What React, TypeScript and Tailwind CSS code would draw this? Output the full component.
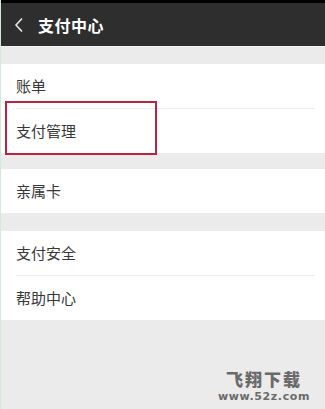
import React from 'react';

const font = { fontFamily: '"Noto Sans CJK SC", "Noto Sans", sans-serif' };

function Row({ label, divider }: { label: string; divider?: boolean }) {
  return (
    <div className="bg-white">
      <div className="h-[44px] flex items-center pl-[15px] text-[15px] text-[#383838]">{label}</div>
      {divider && <div className="ml-[15px] mr-[10px] h-px bg-[#ececec]" />}
    </div>
  );
}

export default function App() {
  return (
    <div className="relative w-[325px] h-[409px] bg-[#ebebeb] overflow-hidden border-l border-[#d4ead6]" style={font}>
      <div className="h-[3px] bg-black" />
      <div className="h-[43px] bg-[#2e2e2e] flex items-center">
        <svg width="10" height="16" viewBox="0 0 10 16" className="ml-[13px]">
          <path d="M8 1.5 L2 8 L8 14.5" fill="none" stroke="#e8e8e8" strokeWidth="1.6" />
        </svg>
        <span className="ml-[14px] text-[16px] font-bold text-white tracking-[0.5px]">支付中心</span>
      </div>
      <div className="h-px bg-[#f6f6f6]" />
      <div className="h-[17px]" />

      <div className="relative">
        <Row label="账单" divider />
        <Row label="支付管理" />
        <div className="absolute left-[4px] top-[37px] w-[152px] h-[54px] border-2 border-[#bd2241]" />
      </div>

      <div className="h-[16px]" />
      <Row label="亲属卡" />

      <div className="h-[18px]" />
      <Row label="支付安全" divider />
      <Row label="帮助中心" />

      <div className="absolute right-[15px] bottom-[7px] flex flex-col items-center gap-[3px] text-[#6a6a6a]">
        <span className="text-[17px] font-black leading-[18px] tracking-[2px]">飞翔下载</span>
        <span className="text-[11px] font-bold leading-[11px] tracking-[0.6px]" style={{ fontFamily: '"DejaVu Sans", sans-serif' }}>www.52z.com</span>
      </div>
    </div>
  );
}
